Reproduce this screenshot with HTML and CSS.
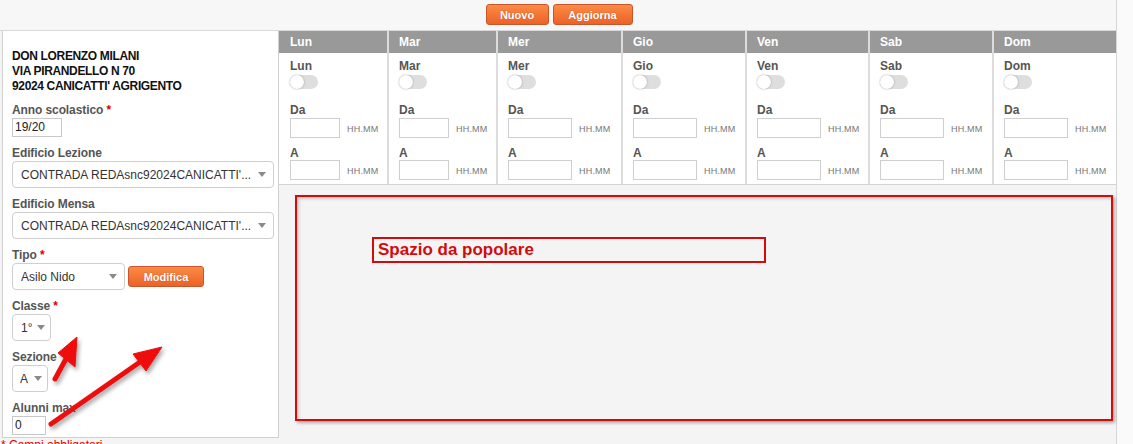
FILE: index.html
```html
<!DOCTYPE html>
<html lang="it">
<head>
<meta charset="utf-8">
<title>Orario</title>
<link rel="stylesheet" href="styles.css">
</head>
<body>
<div class="main">
  <div class="toolbar">
    <button class="btn">Nuovo</button>
    <button class="btn">Aggiorna</button>
  </div>
  <div class="content">
    <div class="side">
      <div class="address">
        <div>DON LORENZO MILANI</div>
        <div>VIA PIRANDELLO N 70</div>
        <div>92024 CANICATTI' AGRIGENTO</div>
      </div>
      <div class="lbl">Anno scolastico <span class="req">*</span></div>
      <div class="inp w49">19/20</div>
      <div class="lbl">Edificio Lezione</div>
      <div class="sel wfull"><span>CONTRADA REDAsnc92024CANICATTI'...</span><i class="caret"></i></div>
      <div class="lbl">Edificio Mensa</div>
      <div class="sel wfull"><span>CONTRADA REDAsnc92024CANICATTI'...</span><i class="caret"></i></div>
      <div class="lbl">Tipo <span class="req">*</span></div>
      <div class="row">
        <div class="sel wtipo"><span>Asilo Nido</span><i class="caret"></i></div>
        <button class="btn btn-mod">Modifica</button>
      </div>
      <div class="lbl">Classe <span class="req">*</span></div>
      <div class="sel wclasse"><span>1°</span><i class="caret"></i></div>
      <div class="lbl">Sezione</div>
      <div class="sel wsez"><span>A</span><i class="caret"></i></div>
      <div class="lbl">Alunni max</div>
      <div class="inp w33">0</div>
    </div>
    <div class="right">
      <div class="days">
        <div class="day"><div class="dh">Lun</div><div class="db"><div class="dl">Lun</div><div class="tog"><i></i></div><div class="dl da">Da</div><div class="tr"><div class="ti s"></div><span class="hh">HH.MM</span></div><div class="dl a">A</div><div class="tr"><div class="ti s"></div><span class="hh">HH.MM</span></div></div></div>
        <div class="day"><div class="dh">Mar</div><div class="db"><div class="dl">Mar</div><div class="tog"><i></i></div><div class="dl da">Da</div><div class="tr"><div class="ti s"></div><span class="hh">HH.MM</span></div><div class="dl a">A</div><div class="tr"><div class="ti s"></div><span class="hh">HH.MM</span></div></div></div>
        <div class="day"><div class="dh">Mer</div><div class="db"><div class="dl">Mer</div><div class="tog"><i></i></div><div class="dl da">Da</div><div class="tr"><div class="ti"></div><span class="hh">HH.MM</span></div><div class="dl a">A</div><div class="tr"><div class="ti"></div><span class="hh">HH.MM</span></div></div></div>
        <div class="day"><div class="dh">Gio</div><div class="db"><div class="dl">Gio</div><div class="tog"><i></i></div><div class="dl da">Da</div><div class="tr"><div class="ti"></div><span class="hh">HH.MM</span></div><div class="dl a">A</div><div class="tr"><div class="ti"></div><span class="hh">HH.MM</span></div></div></div>
        <div class="day"><div class="dh">Ven</div><div class="db"><div class="dl">Ven</div><div class="tog"><i></i></div><div class="dl da">Da</div><div class="tr"><div class="ti"></div><span class="hh">HH.MM</span></div><div class="dl a">A</div><div class="tr"><div class="ti"></div><span class="hh">HH.MM</span></div></div></div>
        <div class="day"><div class="dh">Sab</div><div class="db"><div class="dl">Sab</div><div class="tog"><i></i></div><div class="dl da">Da</div><div class="tr"><div class="ti"></div><span class="hh">HH.MM</span></div><div class="dl a">A</div><div class="tr"><div class="ti"></div><span class="hh">HH.MM</span></div></div></div>
        <div class="day"><div class="dh">Dom</div><div class="db"><div class="dl">Dom</div><div class="tog"><i></i></div><div class="dl da">Da</div><div class="tr"><div class="ti"></div><span class="hh">HH.MM</span></div><div class="dl a">A</div><div class="tr"><div class="ti"></div><span class="hh">HH.MM</span></div></div></div>
      </div>
      <div class="zone">
        <div class="zone-label">Spazio da popolare</div>
      </div>
    </div>
  </div>
  <div class="footnote">* Campi obbligatori</div>
  <svg class="arrows" width="200" height="120" viewBox="0 320 200 120">
    <defs>
      <filter id="sh" x="-20%" y="-20%" width="140%" height="140%">
        <feDropShadow dx="2" dy="3" stdDeviation="2" flood-color="#000" flood-opacity="0.35"/>
      </filter>
    </defs>
    <g filter="url(#sh)" fill="#ee1111" stroke="#ee1111">
      <line x1="55" y1="379" x2="67" y2="357" stroke-width="5" stroke-linecap="round"/>
      <polygon points="77,337 58,353 75,367" stroke-width="1"/>
      <line x1="51" y1="424" x2="140" y2="362" stroke-width="5" stroke-linecap="round"/>
      <polygon points="162,347 133,354 146,371" stroke-width="1"/>
    </g>
  </svg>
</div>
</body>
</html>
```
FILE: styles.css
```css
* { box-sizing: border-box; }
html, body { margin: 0; padding: 0; }
body {
  background: #fafafa;
  font-family: "Liberation Sans", Arial, sans-serif;
  font-size: 12px;
  color: #333;
  overflow: hidden;
  height: 444px;
}
.main {
  position: relative;
  width: 1117px;
  height: 444px;
  background: #f4f4f4;
  border-right: 1px solid #d6d6d6;
}
.toolbar {
  height: 31px;
  background: #f7f7f7;
  border-bottom: 1px solid #d8d8d8;
  display: flex;
  justify-content: center;
  align-items: flex-start;
  gap: 4px;
  padding: 4px 0 0 2px;
}
.btn {
  font-family: "Liberation Sans", Arial, sans-serif;
  font-size: 11px;
  font-weight: bold;
  color: #fff;
  text-shadow: 0 0 1px rgba(120,40,0,0.5);
  background: linear-gradient(#fb8b45, #ec6226);
  border: 1px solid #c9552a;
  border-radius: 3px;
  height: 21px;
  padding: 0;
  cursor: pointer;
}
.toolbar .btn:first-child { width: 63px; }
.toolbar .btn:last-child { width: 80px; }
.content {
  display: flex;
  align-items: flex-start;
}
.side {
  width: 277px;
  height: 407px;
  margin-left: 2px;
  background: #fff;
  border: 1px solid #d0d0d0;
  border-top: 0;
  padding: 18px 0 0 9px;
}
.address {
  font-weight: bold;
  color: #111;
  line-height: 15px;
  letter-spacing: -0.35px;
}
.lbl {
  font-weight: bold;
  color: #555;
  line-height: 14px;
  margin-top: 9px;
  margin-bottom: 1px;
  letter-spacing: -0.1px;
}
.req { color: #d00; }
.inp {
  height: 19px;
  border: 1px solid #c8c8c8;
  background: #fff;
  line-height: 17px;
  padding-left: 2px;
  color: #222;
}
.w49 { width: 50px; }
.w33 { width: 34px; }
.sel {
  height: 27px;
  border: 1px solid #cfcfcf;
  border-radius: 4px;
  background: #fff;
  display: flex;
  align-items: center;
  justify-content: space-between;
  padding: 0 7px 0 8px;
  color: #333;
  white-space: nowrap;
  overflow: hidden;
}
.sel span { overflow: hidden; }
.caret {
  width: 0; height: 0;
  border-left: 4px solid transparent;
  border-right: 4px solid transparent;
  border-top: 5px solid #8a8a8a;
  flex: none;
  margin-left: 4px;
}
.wfull { width: 262px; }
.wtipo { width: 113px; }
.wclasse { width: 39px; padding: 0 5px 0 8px; }
.wsez { width: 36px; padding: 0 5px 0 7px; }
.row { display: flex; align-items: center; gap: 3px; }
.btn-mod { width: 76px; height: 21px; }
.right { flex: 1; }
.days {
  display: grid;
  grid-template-columns: 108px 107px 123px 122px 121px 122px 122px;
  column-gap: 2px;
  background: #dcdcdc;
  border-bottom: 1px solid #d4d4d4;
}
.day { background: #fff; }
.dh {
  height: 22px;
  background: #999;
  color: #fff;
  font-weight: bold;
  line-height: 23px;
  padding-left: 10px;
}
.db {
  padding: 6px 0 4px 10px;
  height: 131px;
}
.day:first-child .db, .day:first-child .dh { padding-left: 11px; }
.dl {
  font-weight: bold;
  color: #555;
  line-height: 14px;
}
.dl.da { margin-top: 14px; line-height: 15px; }
.dl.a { margin-top: 8px; line-height: 14px; }
.tog {
  margin-top: 2px;
  width: 28px;
  height: 14px;
  border-radius: 7px;
  background: #dedede;
  position: relative;
}
.tog i {
  position: absolute;
  left: 0; top: 0;
  width: 14px; height: 14px;
  border-radius: 50%;
  background: #fff;
  box-shadow: 0 0 2px rgba(0,0,0,0.35);
}
.tr { display: flex; align-items: center; }
.ti {
  width: 64px;
  height: 20px;
  border: 1px solid #cfcfcf;
  background: #fff;
}
.ti.s { width: 50px; }
.hh {
  font-size: 9px;
  color: #777;
  margin-left: 7px;
  letter-spacing: 0.2px;
  padding-top: 2px;
}
.zone {
  margin: 10px 3px 0 16px;
  height: 226px;
  border: 2px solid #d40b0b;
  background: #f4f4f4;
  box-shadow: 2px 2px 3px rgba(0,0,0,0.3), inset 2px 2px 3px rgba(0,0,0,0.18);
  padding: 40px 0 0 75px;
}
.zone-label {
  width: 394px;
  height: 26px;
  border: 2px solid #d40b0b;
  color: #d40b0b;
  font-weight: bold;
  font-size: 17px;
  line-height: 22px;
  padding-left: 4px;
}
.footnote {
  color: #d00;
  font-size: 12px;
  line-height: 14px;
  padding-left: 1px;
  margin-top: 0;
}
.arrows {
  position: absolute;
  left: 0;
  top: 320px;
  pointer-events: none;
}
```
